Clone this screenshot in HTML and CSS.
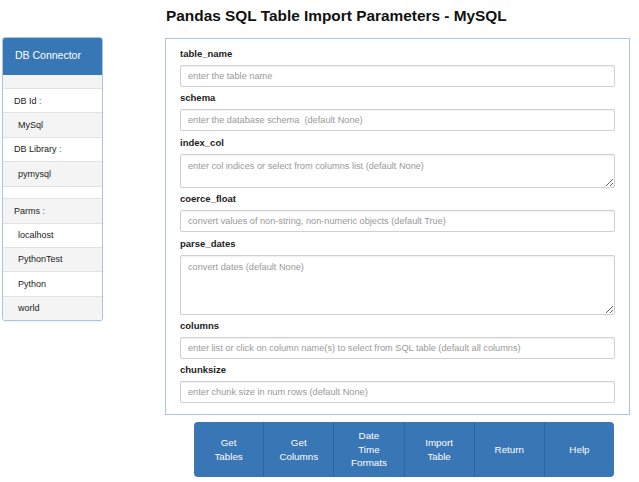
FILE: index.html
```html
<!DOCTYPE html>
<html>
<head>
<meta charset="utf-8">
<link rel="stylesheet" href="styles.css">
</head>
<body>
<div class="page">
  <aside class="sidebar">
    <div class="side-head">DB Connector</div>
    <div class="row gap gray"></div>
    <div class="row label">DB Id <span class="colon">:</span></div>
    <div class="row value gray">MySql</div>
    <div class="row label">DB Library <span class="colon">:</span></div>
    <div class="row value gray">pymysql</div>
    <div class="row gap"></div>
    <div class="row label gray">Parms <span class="colon">:</span></div>
    <div class="row value">localhost</div>
    <div class="row value gray">PythonTest</div>
    <div class="row value">Python</div>
    <div class="row value gray last">world</div>
  </aside>
  <main class="main">
    <h1 class="title">Pandas SQL Table Import Parameters - MySQL</h1>
    <section class="panel">
      <div class="group">
        <label class="flabel">table_name</label>
        <input class="field" placeholder="enter the table name">
      </div>
      <div class="group">
        <label class="flabel">schema</label>
        <input class="field" placeholder="enter the database schema  (default None)">
      </div>
      <div class="group">
        <label class="flabel">index_col</label>
        <textarea class="field area-sm" placeholder="enter col indices or select from columns list (default None)"></textarea>
      </div>
      <div class="group">
        <label class="flabel">coerce_float</label>
        <input class="field" placeholder="convert values of non-string, non-numeric objects (default True)">
      </div>
      <div class="group">
        <label class="flabel">parse_dates</label>
        <textarea class="field area-lg" placeholder="convert dates (default None)"></textarea>
      </div>
      <div class="group">
        <label class="flabel">columns</label>
        <input class="field" placeholder="enter list or click on column name(s) to select from SQL table (default all columns)">
      </div>
      <div class="group last">
        <label class="flabel">chunksize</label>
        <input class="field" placeholder="enter chunk size in num rows (default None)">
      </div>
    </section>
    <div class="btn-group">
      <button class="btn">Get<br>Tables</button>
      <button class="btn">Get<br>Columns</button>
      <button class="btn">Date<br>Time<br>Formats</button>
      <button class="btn">Import<br>Table</button>
      <button class="btn">Return</button>
      <button class="btn">Help</button>
    </div>
  </main>
</div>
</body>
</html>
```

FILE: styles.css
```css
* { box-sizing: border-box; }
html, body { margin: 0; padding: 0; background: #fff; }
body {
  font-family: "Liberation Sans", Arial, sans-serif;
  color: #333;
}
.page {
  display: flex;
  align-items: flex-start;
  padding-left: 2px;
}
.sidebar {
  width: 101px;
  margin-top: 37px;
  border: 1px solid #a9c4e6;
  border-radius: 3px;
  overflow: hidden;
  font-size: 9px;
  box-shadow: 0 1px 1px rgba(0,0,0,0.05);
}
.side-head {
  background: #3877b6;
  color: #fff;
  font-size: 10.5px;
  height: 37px;
  padding: 11px 0 0 12px;
  line-height: 12px;
}
.row {
  border-top: 1px solid #e2e2e2;
  background: #fff;
  padding: 5.5px 0 5.5px 11px;
  line-height: 12.4px;
  color: #222;
}
.row.gray { background: #f4f4f4; }
.row.gap { height: 12.5px; padding: 0; }
.side-head + .row { border-top: none; height: 13px; }
.row.value { padding-left: 15px; }
.colon { color: #666; }
.main {
  margin-left: 62px;
  width: 465px;
}
.title {
  font-size: 15.4px;
  font-weight: bold;
  color: #111;
  margin: 6px 0 0 1px;
  line-height: 20px;
  height: 32px;
}
.panel {
  border: 1.5px solid #a9c6ea;
  padding: 8px 14px 12px 14px;
  height: 377px;
}
.group { margin-bottom: 4.4px; }
.group.last { margin-bottom: 0; }
.flabel {
  display: block;
  font-size: 9.5px;
  font-weight: bold;
  line-height: 13px;
  margin-bottom: 5px;
  color: #222;
}
.field {
  display: block;
  width: 100%;
  height: 22px;
  border: 1px solid #d0d0d0;
  border-radius: 2px;
  padding: 0 7px;
  font-family: "Liberation Sans", Arial, sans-serif;
  font-size: 9.2px;
  color: #555;
  box-shadow: inset 0 1px 1px rgba(0,0,0,0.06);
  outline: none;
  background: #fff;
}
.field::placeholder { color: #999; }
textarea.field {
  padding: 5px 7px;
  resize: vertical;
  line-height: 12px;
}
.area-sm { height: 34px; }
.area-lg { height: 60px; }
.btn-group {
  display: flex;
  margin: 7px 0 0 29px;
  width: 420px;
  height: 55px;
  border-radius: 4px;
  overflow: hidden;
}
.btn {
  flex: 1 1 0;
  background: #3876b5;
  color: #fff;
  border: none;
  border-left: 1px solid #2e67a0;
  font-family: "Liberation Sans", Arial, sans-serif;
  font-size: 9.8px;
  line-height: 13.7px;
  padding: 0;
  margin: 0;
}
.btn:first-child { border-left: none; }
```
